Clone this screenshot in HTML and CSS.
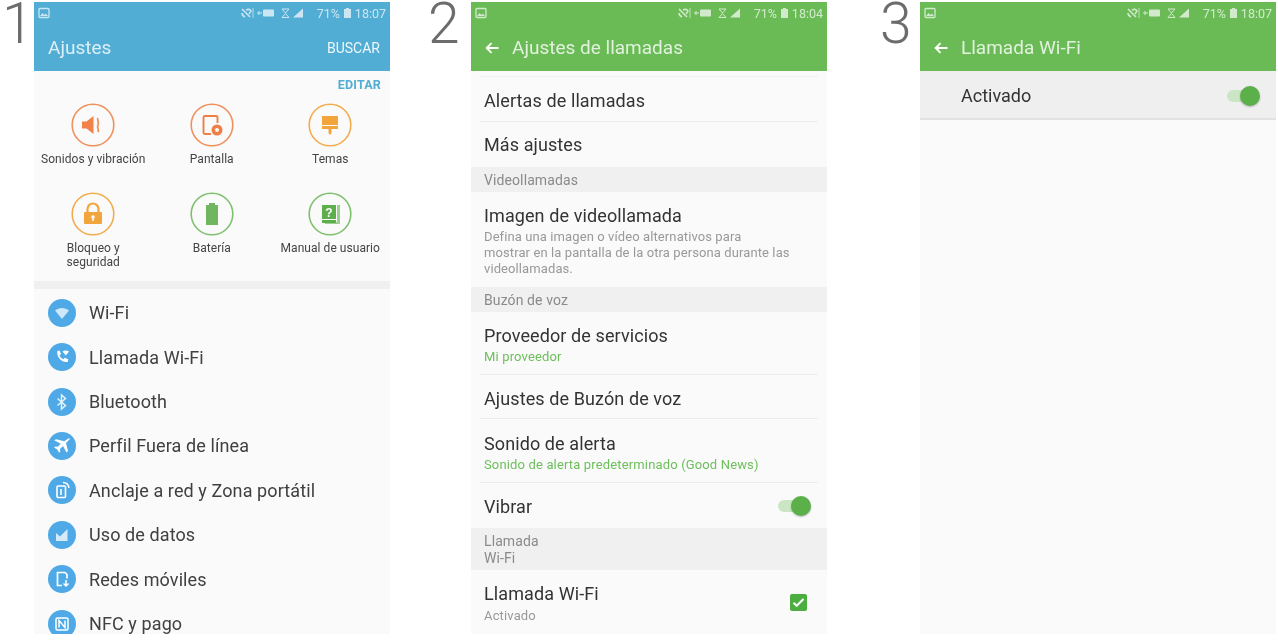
FILE: index.html
```html
<!DOCTYPE html>
<html lang="es">
<head>
    <meta charset="UTF-8">
    <title>Llamada Wi-Fi</title>
    <link rel="stylesheet" href="styles.css">
</head>
<body>
    <svg class="defs" width="0" height="0">
        <symbol id="st-pic" viewBox="0 0 12 12">
            <path d="M2 1.5h8a1 1 0 0 1 1 1v7a1 1 0 0 1-1 1H2a1 1 0 0 1-1-1v-7a1 1 0 0 1 1-1z" fill="none" stroke="#fff" stroke-width="1.3"/>
            <path d="M2 9l2.6-3 1.8 2 1.4-1.4L10 9z" fill="#fff"/>
        </symbol>
        <symbol id="st-right" viewBox="0 0 72 12">
            <path d="M1 2l8 8M5 3c2-1 4-1 5 1-1 1-1 2-2 3M1 6c0 2 1 3 3 4" fill="none" stroke="#fff" stroke-width="1.6"/>
            <path d="M12 1v10" stroke="#fff" stroke-width=".8"/>
            <path d="M16 6h5M18 4v4" stroke="#fff" stroke-width="1"/>
            <rect x="22" y="2.5" width="11" height="7" rx="1" fill="#fff"/>
            <path d="M41 2h7l-3.5 4zM41 10.500h7l-3.500-4z" fill="none" stroke="#fff" stroke-width="1"/>
            <path d="M52 10.500L62 1.500v9z" fill="#fff"/>
        </symbol>
        <symbol id="st-batt" viewBox="0 0 9 12">
            <path d="M3 1h3v1h2v9H1V2h2z" fill="#fff"/>
        </symbol>
        <symbol id="back" viewBox="0 0 14 12">
            <path d="M13.500 6H2M6.500 1.200L1.700 6l4.800 4.800" fill="none" stroke="#fff" stroke-width="1.900"/>
        </symbol>
    </svg>

    <main class="page">
        <div class="num">1</div>
        <section class="screen">
            <header class="bar bar-blue">
                <div class="status">
                    <svg class="st-pic"><use href="#st-pic"/></svg>
                    <div class="st-right">
                        <svg class="st-icons"><use href="#st-right"/></svg>
                        <span>71%</span>
                        <svg class="st-batt"><use href="#st-batt"/></svg>
                        <span class="st-time">18:07</span>
                    </div>
                </div>
                <div class="bar-row">
                    <h1 class="bar-title">Ajustes</h1>
                    <span class="bar-action">BUSCAR</span>
                </div>
            </header>
            <div class="edit-row"><span>EDITAR</span></div>
            <div class="quick">
                <div class="quick-item">
                    <svg class="ring" viewBox="0 0 44 44">
                        <circle cx="22" cy="22" r="20.800" fill="none" stroke="#f0905c" stroke-width="1.600"/>
                        <path d="M11 18.500h4.500l7-5.500v18l-7-5.500H11z" fill="#f0824a"/>
                        <path d="M27 15c-1.500 2 1.500 3.500 0 7s1.500 4 0 7" fill="none" stroke="#f0905c" stroke-width="1.800"/>
                    </svg>
                    <span>Sonidos y vibración</span>
                </div>
                <div class="quick-item">
                    <svg class="ring" viewBox="0 0 44 44">
                        <circle cx="22" cy="22" r="20.800" fill="none" stroke="#f0905c" stroke-width="1.600"/>
                        <path d="M21 31h-6a1.500 1.500 0 0 1-1.500-1.500v-15A1.500 1.500 0 0 1 15 13h11a1.500 1.500 0 0 1 1.500 1.500V20" fill="none" stroke="#ee7f45" stroke-width="1.900"/>
                        <circle cx="27" cy="27" r="5.500" fill="#ee7f45"/>
                        <circle cx="27" cy="27" r="2" fill="#fafafa"/>
                    </svg>
                    <span>Pantalla</span>
                </div>
                <div class="quick-item">
                    <svg class="ring" viewBox="0 0 44 44">
                        <circle cx="22" cy="22" r="20.800" fill="none" stroke="#f3ac4d" stroke-width="1.600"/>
                        <rect x="14" y="13" width="16" height="9" fill="#f3a53d"/>
                        <rect x="14" y="23" width="16" height="3" fill="#f3a53d"/>
                        <path d="M20.500 26h3v4l-1.500 2-1.500-2z" fill="#f3a53d"/>
                    </svg>
                    <span>Temas</span>
                </div>
                <div class="quick-item">
                    <svg class="ring" viewBox="0 0 44 44">
                        <circle cx="22" cy="22" r="20.800" fill="none" stroke="#f3ac4d" stroke-width="1.600"/>
                        <path d="M16.500 20v-3a5.500 5.500 0 0 1 11 0v3" fill="none" stroke="#f3a53d" stroke-width="2.200"/>
                        <rect x="13" y="20" width="18" height="12" rx="1" fill="#f3a53d"/>
                        <circle cx="22" cy="25" r="1.800" fill="#fafafa"/>
                        <rect x="21.200" y="25" width="1.600" height="4" fill="#fafafa"/>
                    </svg>
                    <span>Bloqueo y<br>seguridad</span>
                </div>
                <div class="quick-item">
                    <svg class="ring" viewBox="0 0 44 44">
                        <circle cx="22" cy="22" r="20.800" fill="none" stroke="#7fc06f" stroke-width="1.600"/>
                        <path d="M19 11h6v2h3v20H16V13h3z" fill="#6fb65e"/>
                    </svg>
                    <span>Batería</span>
                </div>
                <div class="quick-item">
                    <svg class="ring" viewBox="0 0 44 44">
                        <circle cx="22" cy="22" r="20.800" fill="none" stroke="#7fc06f" stroke-width="1.600"/>
                        <path d="M29 13h3v19H17v-2h12z" fill="#9ccf90"/>
                        <path d="M14 13h14v14H14zM14 28h14v3H14z" fill="#5fae4d"/>
                        <text x="21" y="24.500" class="ring-q">?</text>
                    </svg>
                    <span>Manual de usuario</span>
                </div>
            </div>
            <div class="band-thin"></div>
            <ul class="menu">
                <li>
                    <svg class="dot" viewBox="0 0 28 28"><circle cx="14" cy="14" r="14" fill="#4ea9e6"/>
                        <path d="M7 11.500c4-3.500 10-3.500 14 0L14 20z" fill="#cfe8f9"/></svg>
                    Wi-Fi
                </li>
                <li>
                    <svg class="dot" viewBox="0 0 28 28"><circle cx="14" cy="14" r="14" fill="#4ea9e6"/>
                        <path d="M9 8l2.500-.5 1.500 3.500-1.500 1.500c.8 1.800 2 3 3.800 3.800l1.500-1.500 3.500 1.500-.5 2.500c-6 1.500-12-5.500-10.300-10.800z" fill="#fff"/>
                        <path d="M14.500 8.500c2-1.200 4.500-1.200 6.500 0L17.800 12.500z" fill="#fff"/></svg>
                    Llamada Wi-Fi
                </li>
                <li>
                    <svg class="dot" viewBox="0 0 28 28"><circle cx="14" cy="14" r="14" fill="#4ea9e6"/>
                        <path d="M9.500 10.500l8 7-4 3.500v-14l4 3.500-8 7" fill="none" stroke="#e4f2fc" stroke-width="1.500"/></svg>
                    Bluetooth
                </li>
                <li>
                    <svg class="dot" viewBox="0 0 28 28"><circle cx="14" cy="14" r="14" fill="#4ea9e6"/>
                        <path d="M20.500 6.500c1-.5 1.500 0 1 1l-3.500 3.500 2 8-1.500 1.500-3.500-6.500-3 3 .3 2.500-1.200 1.200-1.800-3.300-3.300-1.800 1.200-1.200 2.500.3 3-3-6.500-3.500L8.200 7.200l8 2z" fill="#fff"/></svg>
                    Perfil Fuera de línea
                </li>
                <li>
                    <svg class="dot" viewBox="0 0 28 28"><circle cx="14" cy="14" r="14" fill="#4ea9e6"/>
                        <rect x="9" y="10" width="8.500" height="11.500" rx="1" fill="none" stroke="#fff" stroke-width="1.600"/>
                        <path d="M13 13v6" stroke="#fff" stroke-width="1.600"/>
                        <path d="M15 6.500c3 0 5.500 2 6 5.500" fill="none" stroke="#fff" stroke-width="1.500"/></svg>
                    Anclaje a red y Zona portátil
                </li>
                <li>
                    <svg class="dot" viewBox="0 0 28 28"><circle cx="14" cy="14" r="14" fill="#4ea9e6"/>
                        <path d="M8 20v-8l4 3.500L19.500 8v12z" fill="#d6ebfa"/></svg>
                    Uso de datos
                </li>
                <li>
                    <svg class="dot" viewBox="0 0 28 28"><circle cx="14" cy="14" r="14" fill="#4ea9e6"/>
                        <path d="M14 20.500H9.500v-13H17l2 2v4" fill="none" stroke="#fff" stroke-width="1.700"/>
                        <path d="M18 15v6M15.500 18.500L18 21l2.500-2.500" fill="none" stroke="#fff" stroke-width="1.500"/></svg>
                    Redes móviles
                </li>
                <li>
                    <svg class="dot" viewBox="0 0 28 28"><circle cx="14" cy="14" r="14" fill="#4ea9e6"/>
                        <rect x="8" y="8" width="12" height="12" rx="1.500" fill="none" stroke="#fff" stroke-width="1.500"/>
                        <path d="M11 17.500v-7l6 7v-7" fill="none" stroke="#fff" stroke-width="1.500"/></svg>
                    NFC y pago
                </li>
            </ul>
        </section>

        <div class="num num-2">2</div>
        <section class="screen">
            <header class="bar bar-green">
                <div class="status">
                    <svg class="st-pic"><use href="#st-pic"/></svg>
                    <div class="st-right">
                        <svg class="st-icons"><use href="#st-right"/></svg>
                        <span>71%</span>
                        <svg class="st-batt"><use href="#st-batt"/></svg>
                        <span class="st-time">18:04</span>
                    </div>
                </div>
                <div class="bar-row">
                    <svg class="back"><use href="#back"/></svg>
                    <h1 class="bar-title">Ajustes de llamadas</h1>
                </div>
            </header>
            <div class="row line h51"><b>Alertas de llamadas</b></div>
            <div class="row h45"><b>Más ajustes</b></div>
            <div class="band h25">Videollamadas</div>
            <div class="row h95">
                <b>Imagen de videollamada</b>
                <p class="desc">Defina una imagen o vídeo alternativos para<br>mostrar en la pantalla de la otra persona durante las<br>videollamadas.</p>
            </div>
            <div class="band h25">Buzón de voz</div>
            <div class="row line h63"><b>Proveedor de servicios</b><p class="sub">Mi proveedor</p></div>
            <div class="row line h44"><b>Ajustes de Buzón de voz</b></div>
            <div class="row line h64 h64-alert"><b>Sonido de alerta</b><p class="sub">Sonido de alerta predeterminado (Good News)</p></div>
            <div class="row row-flex h45"><b>Vibrar</b><span class="toggle"></span></div>
            <div class="band band-2 h42">Llamada<br>Wi-Fi</div>
            <div class="row row-flex h64">
                <div><b>Llamada Wi-Fi</b><p class="sub sub-grey">Activado</p></div>
                <svg class="check" viewBox="0 0 17 17"><rect width="17" height="17" rx="2" fill="#4cae3f"/>
                    <path d="M3.500 8.800l3.200 3L13.500 5" fill="none" stroke="#fff" stroke-width="2"/></svg>
            </div>
        </section>

        <div class="num num-3">3</div>
        <section class="screen">
            <header class="bar bar-green">
                <div class="status">
                    <svg class="st-pic"><use href="#st-pic"/></svg>
                    <div class="st-right">
                        <svg class="st-icons"><use href="#st-right"/></svg>
                        <span>71%</span>
                        <svg class="st-batt"><use href="#st-batt"/></svg>
                        <span class="st-time">18:07</span>
                    </div>
                </div>
                <div class="bar-row">
                    <svg class="back"><use href="#back"/></svg>
                    <h1 class="bar-title">Llamada Wi-Fi</h1>
                </div>
            </header>
            <div class="switch-row"><b>Activado</b><span class="toggle"></span></div>
        </section>
    </main>
</body>
</html>
```

FILE: styles.css
```css
* {
    box-sizing: border-box;
}

body {
    margin: 0;
    background: #fff;
    font-family: Roboto, "Liberation Sans", sans-serif;
    color: #333;
}

.defs {
    display: block;
    height: 0;
}

.page {
    display: grid;
    grid-template-columns: 34px 356px 81px 356px 93px 356px;
    height: 643px;
    padding-top: 2px;
    overflow: hidden;
}

.num {
    font-family: Roboto, sans-serif;
    font-weight: 300;
    font-size: 57px;
    line-height: 44px;
    height: 44px;
    padding-left: 2px;
    color: #6c6c6c;
    filter: blur(0.5px);
}

.num-2 {
    padding-left: 38px;
}

.num-3 {
    padding-left: 53px;
}

.screen {
    height: 632px;
    background: #fafafa;
    overflow: hidden;
    filter: blur(0.6px);
}

/* top bar */
.bar {
    height: 69px;
    color: #fff;
}

.bar-blue {
    background: #51add4;
}

.bar-green {
    background: #6abb56;
}

.status {
    display: flex;
    justify-content: space-between;
    align-items: center;
    height: 22px;
    padding: 0 4px;
    font-size: 12.500px;
    opacity: 0.7;
}

.st-pic {
    width: 12px;
    height: 12px;
}

.st-right {
    display: flex;
    align-items: center;
    gap: 3px;
}

.st-icons {
    width: 72px;
    height: 12px;
    margin-right: 1px;
}

.st-batt {
    width: 9px;
    height: 12px;
}

.st-time {
    font-size: 12.500px;
}

.bar-row {
    display: flex;
    align-items: center;
    height: 47px;
    padding: 0 10px 0 14px;
}

.bar-title {
    margin: 0;
    font-size: 19px;
    font-weight: 400;
    opacity: 0.8;
}

.bar-action {
    margin-left: auto;
    font-size: 14px;
    opacity: 0.9;
}

.back {
    width: 14px;
    height: 12px;
    margin-right: 13px;
}

/* phone 1 */
.edit-row {
    height: 25px;
    padding: 6px 9px 0;
    text-align: right;
    font-size: 12.500px;
    font-weight: 700;
    letter-spacing: 0.2px;
    color: #51add4;
}

.quick {
    display: grid;
    grid-template-columns: repeat(3, 118.500px);
    grid-auto-rows: 89px;
    height: 185px;
}

.quick-item {
    display: flex;
    flex-direction: column;
    align-items: center;
    padding-top: 7px;
    font-size: 12px;
    letter-spacing: 0.05px;
    line-height: 14px;
    text-align: center;
    color: #444;
    white-space: nowrap;
}

.ring {
    width: 44px;
    height: 44px;
    margin-bottom: 5px;
    flex: none;
}

.ring-q {
    font: 700 12px "Liberation Sans", sans-serif;
    fill: #fff;
    text-anchor: middle;
}

.band-thin {
    height: 8px;
    background: #f0f0f0;
}

.menu {
    list-style: none;
    margin: 0;
    padding: 1.600px 0 0 14px;
}

.menu li {
    display: flex;
    align-items: center;
    gap: 13px;
    height: 44.400px;
    font-size: 18px;
    letter-spacing: 0.1px;
    color: #404040;
}

.dot {
    width: 28px;
    height: 28px;
    flex: none;
}

/* phone 2 rows */
.row {
    position: relative;
    padding: 0 13px;
}

.row b {
    display: block;
    font-weight: 400;
    font-size: 18px;
    letter-spacing: 0.1px;
    line-height: 22px;
    color: #333;
}

.line::after {
    content: "";
    position: absolute;
    left: 9px;
    right: 9px;
    bottom: 0;
    height: 1px;
    background: #ececec;
}

.h51::before {
    content: "";
    position: absolute;
    left: 9px;
    right: 9px;
    top: 5px;
    height: 1px;
    background: #f1f1f1;
}

.h51 { height: 51px; padding-top: 19px; }
.h45 { height: 45px; padding-top: 12px; }
.h95 { height: 95px; padding-top: 13px; }
.h63 { height: 63px; padding-top: 13px; }
.h44 { height: 44px; padding-top: 13px; }
.h64 { height: 64px; padding-top: 13px; }
.h64-alert { padding-top: 14px; }
.h25 { height: 25px; }
.h42 { height: 42px; }

.row-flex {
    display: flex;
    justify-content: space-between;
    align-items: center;
    padding-top: 0;
    padding-right: 16px;
}

.row-flex > b,
.row-flex > div {
    margin-top: 2px;
}

.band {
    padding: 5px 13px 0;
    background: #f0f0f0;
    font-size: 14px;
    letter-spacing: 0.1px;
    line-height: 16px;
    color: #8a8a8a;
}

.band-2 {
    padding-top: 5px;
    line-height: 17px;
}

.desc {
    margin: 2px 0 0;
    font-size: 13px;
    letter-spacing: 0.1px;
    line-height: 16px;
    color: #999;
}

.sub {
    margin: 2px 0 0;
    font-size: 13px;
    letter-spacing: 0.15px;
    line-height: 16px;
    color: #6cbf5b;
}

.sub-grey {
    margin-top: 3px;
    color: #999;
}

.toggle {
    position: relative;
    display: block;
    width: 33px;
    height: 12px;
    border-radius: 6px;
    background: linear-gradient(90deg, #cbe6c4 0, #cbe6c4 24px, transparent 24px);
}

.toggle::after {
    content: "";
    position: absolute;
    right: 0;
    top: -4px;
    width: 20px;
    height: 20px;
    border-radius: 50%;
    background: #5cb04a;
    box-shadow: 0 1px 2px rgba(0,0,0,0.25);
}

.check {
    width: 17px;
    height: 17px;
    margin-right: 4px;
}

/* phone 3 */
.switch-row {
    display: flex;
    justify-content: space-between;
    align-items: center;
    height: 49px;
    padding: 2px 16px 0 41px;
    background: #efefef;
    border-bottom: 2px solid #e2e2e2;
}

.switch-row b {
    font-weight: 400;
    font-size: 18px;
    color: #333;
}
```
